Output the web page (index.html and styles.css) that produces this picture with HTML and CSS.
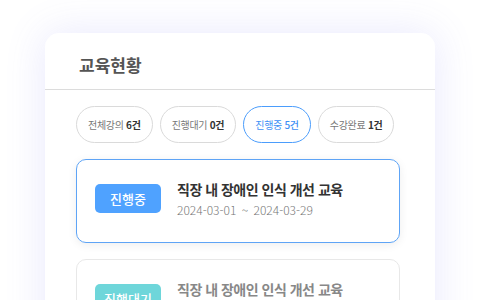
FILE: index.html
```html
<!DOCTYPE html>
<html lang="ko">
<head>
  <meta charset="UTF-8" />
  <title>교육현황</title>
  <link rel="stylesheet" href="styles.css">
</head>
<body>

<!-- 교육현황 카드 -->
<div class="panel">
  <div class="panel-head">교육현황</div>

  <div class="panel-body">
    <!-- 상태 필터 -->
    <div class="tabs">
      <button class="tab">전체강의 <b>6건</b></button>
      <button class="tab">진행대기 <b>0건</b></button>
      <button class="tab active">진행중 <b>5건</b></button>
      <button class="tab">수강완료 <b>1건</b></button>
    </div>

    <!-- 강의 목록 -->
    <div class="course active">
      <span class="badge">진행중</span>
      <div class="course-info">
        <div class="course-title">직장 내 장애인 인식 개선 교육</div>
        <div class="course-date">2024-03-01 ~ 2024-03-29</div>
      </div>
    </div>

    <div class="course wait">
      <span class="badge">진행대기</span>
      <div class="course-info">
        <div class="course-title">직장 내 장애인 인식 개선 교육</div>
        <div class="course-date">2024-04-01 ~ 2024-04-29</div>
      </div>
    </div>
  </div>
</div>

</body>
</html>
```

FILE: styles.css
```css
html {
  overflow: hidden;
}
body {
  font-family: "Noto Sans CJK KR", "Noto Sans", sans-serif;
  background: #fff;
  margin: 0;
  padding: 33px 45px 0;
  height: 300px;
  overflow: hidden;
  box-sizing: border-box;
}
.panel {
  width: 390px;
  background: #fff;
  border-radius: 14px;
  box-shadow: 0 0 40px rgba(110, 110, 240, 0.16);
  min-height: 320px;
}
.panel-head {
  height: 57px;
  line-height: 64px;
  padding-left: 34px;
  font-size: 17px;
  font-weight: 700;
  color: #555;
  border-bottom: 1px solid #dcdcdc;
  box-sizing: border-box;
}
.panel-body {
  padding: 16px 35px 0 31px;
}
.tabs {
  display: flex;
  gap: 7px;
  margin-bottom: 16px;
}
.tab {
  height: 37px;
  padding: 0 11px;
  border: 1px solid #dadada;
  border-radius: 20px;
  background: #fff;
  font-family: inherit;
  font-size: 10px;
  color: #777;
  letter-spacing: -0.3px;
  white-space: nowrap;
}
.tab b {
  color: #333;
  font-weight: 700;
}
.tab.active {
  border-color: #4b9dfc;
  color: #3d8ff5;
}
.tab.active b {
  color: #3d8ff5;
  font-weight: 500;
}
.course {
  display: flex;
  align-items: center;
  height: 84px;
  padding: 0 18px 6px;
  border: 1px solid #e8e8e8;
  border-radius: 10px;
  box-sizing: border-box;
  margin-bottom: 16px;
}
.course.active {
  border-color: #5ea4f6;
  box-shadow: 0 2px 10px rgba(0, 0, 0, 0.07);
}
.badge {
  width: 66px;
  height: 29px;
  line-height: 29px;
  border-radius: 5px;
  text-align: center;
  color: #fff;
  font-size: 13px;
  font-weight: 500;
  flex-shrink: 0;
  margin-right: 16px;
}
.active .badge {
  background: #4fa2ff;
}
.wait .badge {
  background: #6ed6da;
}
.course-title {
  font-size: 14px;
  font-weight: 700;
  color: #333;
  letter-spacing: -0.5px;
}
.course-date {
  margin-top: 2px;
  font-size: 12px;
  font-weight: 300;
  color: #777;
  word-spacing: 2px;
}
.wait .course-title {
  color: #888;
}
.wait .course-date {
  color: #aaa;
}
```
